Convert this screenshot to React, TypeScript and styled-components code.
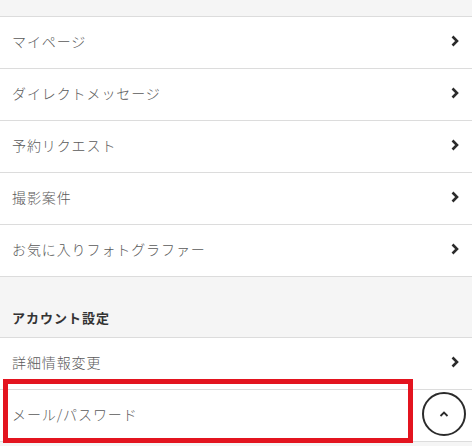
import React from "react";
import styled, { createGlobalStyle } from "styled-components";

const Global = createGlobalStyle`
  html, body { margin: 0; padding: 0; background: #fff; }
  body { font-family: "Noto Sans CJK JP", "Noto Sans", sans-serif; overflow: hidden; }
`;

const Page = styled.div`
  position: relative;
  width: 472px;
  height: 446px;
  background: #f5f5f5;
  padding-top: 16px;
  box-sizing: border-box;
`;

const List = styled.ul<{ $top?: boolean }>`
  list-style: none;
  margin: 0;
  padding: 0;
  border-top: ${(p) => (p.$top ? "1px solid #dcdcdc" : "none")};
`;

const Row = styled.li`
  display: flex;
  align-items: center;
  justify-content: space-between;
  height: 52px;
  box-sizing: border-box;
  padding: 0 13px 4px 12px;
  background: #fff;
  border-bottom: 1px solid #dcdcdc;
  color: #5a5a5a;
  font-size: 14px;
  font-weight: 300;
  letter-spacing: 0.9px;
  line-height: 1;
`;

const SectionHeader = styled.div`
  height: 61px;
  box-sizing: border-box;
  padding: 31px 12px 0;
  font-size: 13px;
  font-weight: 700;
  letter-spacing: 1px;
  color: #333;
  background: #f5f5f5;
  border-bottom: 1px solid #dcdcdc;
`;

const Chevron = styled.svg`
  width: 8px;
  height: 12px;
  color: #2b2b2b;
`;

const Highlight = styled.div`
  position: absolute;
  left: 3px;
  top: 379px;
  width: 400px;
  height: 54px;
  border: 5px solid #e3141f;
  pointer-events: none;
`;

const TopButton = styled.button`
  position: absolute;
  left: 422px;
  top: 392px;
  width: 44px;
  height: 44px;
  border-radius: 50%;
  border: 2px solid #2b2b2b;
  background: #fff;
  display: flex;
  align-items: center;
  justify-content: center;
  padding: 0;
`;

const ChevronRight = () => (
  <Chevron viewBox="0 0 8 12">
    <path d="M1.5 1.5 L6 6 L1.5 10.5" fill="none" stroke="currentColor" strokeWidth="2.6" strokeLinejoin="miter" />
  </Chevron>
);

const items = ["マイページ", "ダイレクトメッセージ", "予約リクエスト", "撮影案件", "お気に入りフォトグラファー"];

export default function App() {
  return (
    <Page>
      <Global />
      <List $top>
        {items.map((t) => (
          <Row key={t}>
            <span>{t}</span>
            <ChevronRight />
          </Row>
        ))}
      </List>
      <SectionHeader>アカウント設定</SectionHeader>
      <List>
        <Row>
          <span>詳細情報変更</span>
          <ChevronRight />
        </Row>
        <Row>
          <span>メール/パスワード</span>
          <span />
        </Row>
      </List>
      <Highlight />
      <TopButton aria-label="top">
        <svg width="10" height="8" viewBox="0 0 10 8">
          <path d="M1.5 6 L5 2.5 L8.5 6" fill="none" stroke="#2b2b2b" strokeWidth="1.8" />
        </svg>
      </TopButton>
    </Page>
  );
}
